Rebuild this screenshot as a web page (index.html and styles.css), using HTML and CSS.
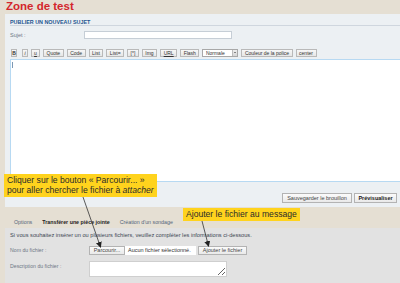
FILE: index.html
```html
<!DOCTYPE html>
<html lang="fr">
<head>
    <meta charset="UTF-8">
    <meta name="viewport" content="width=device-width, initial-scale=1.0">
    <title>Zone de test - Publier un nouveau sujet</title>
    <link rel="stylesheet" href="styles.css">
</head>
<body>
    <div class="page">
        <h1 class="site-title">Zone de test</h1>

        <div class="panel">
            <h2 class="panel-title">Publier un nouveau sujet</h2>
            <div class="field-row">
                <label class="field-label">Sujet :</label>
                <span class="input subject"></span>
            </div>
            <div class="toolbar">
                <span class="tb-btn tb-b">B</span>
                <span class="tb-btn tb-i">i</span>
                <span class="tb-btn tb-u">u</span>
                <span class="tb-btn">Quote</span>
                <span class="tb-btn">Code</span>
                <span class="tb-btn">List</span>
                <span class="tb-btn">List=</span>
                <span class="tb-btn">[*]</span>
                <span class="tb-btn">Img</span>
                <span class="tb-btn tb-url">URL</span>
                <span class="tb-btn">Flash</span>
                <span class="tb-select">Normale<span class="tb-select-arrow"></span></span>
                <span class="tb-btn">Couleur de la police</span>
                <span class="tb-btn">center</span>
            </div>
            <div class="message"><span class="caret"></span></div>
            <div class="submit-row">
                <span class="btn btn-draft">Sauvegarder le brouillon</span>
                <span class="btn btn-preview">Prévisualiser</span>
            </div>
        </div>

        <ul class="tabs">
            <li class="tab">Options</li>
            <li class="tab active">Transférer une pièce jointe</li>
            <li class="tab">Création d'un sondage</li>
        </ul>

        <div class="attach-panel">
            <p class="attach-intro">Si vous souhaitez insérer un ou plusieurs fichiers, veuillez compléter les informations ci-dessous.</p>
            <div class="attach-row">
                <label class="attach-label">Nom du fichier :</label>
                <span class="file-input">
                    <span class="btn btn-browse">Parcourir...</span>
                    <span class="file-name">Aucun fichier sélectionné.</span>
                </span>
                <span class="btn btn-add">Ajouter le fichier</span>
            </div>
            <div class="attach-row attach-row-top">
                <label class="attach-label">Description du fichier :</label>
                <textarea class="file-comment"></textarea>
            </div>
        </div>
    </div>

    <div class="callout callout-browse">Cliquer sur le bouton « Parcourir... »<br>pour aller chercher le fichier à <em>attacher</em></div>
    <div class="callout callout-add">Ajouter le fichier au message</div>

    <svg class="arrows" width="400" height="283" viewBox="0 0 400 283">
        <defs>
            <marker id="head" markerWidth="6" markerHeight="6" refX="5" refY="3" orient="auto" markerUnits="userSpaceOnUse">
                <path d="M0,0 L6,3 L0,6 Z" fill="#222"/>
            </marker>
        </defs>
        <line x1="83" y1="197" x2="100.5" y2="247" stroke="#333" stroke-width="0.8" marker-end="url(#head)"/>
        <line x1="202" y1="221" x2="208.5" y2="246" stroke="#333" stroke-width="0.8" marker-end="url(#head)"/>
    </svg>
</body>
</html>
```

FILE: styles.css
```css
* {
    margin: 0;
    padding: 0;
    box-sizing: border-box;
}

body {
    background: #e5dfd3;
    font-family: 'Liberation Sans', Arial, sans-serif;
    font-size: 5.5px;
    color: #333;
    width: 400px;
    height: 283px;
    overflow: hidden;
    position: relative;
}

.page {
    padding-left: 5px;
}

.site-title {
    font-size: 11.5px;
    line-height: 13.5px;
    color: #d3262c;
    padding-left: 1px;
}

/* posting panel */
.panel {
    background: #ecf0f3;
    padding: 5px 3px 4px 5px;
    overflow: hidden;
}

.panel-title {
    font-size: 5.4px;
    line-height: 6px;
    color: #1d5590;
    text-transform: uppercase;
    border-bottom: 1px solid #cfd6de;
    margin-right: -3px;
}

.field-row {
    display: flex;
    align-items: center;
    margin-top: 5px;
}

.field-label {
    width: 74px;
    color: #6d7785;
}

.input {
    display: block;
    background: #fff;
    border: 1px solid #c6ced6;
}

.subject {
    width: 148px;
    height: 8px;
}

.toolbar {
    display: flex;
    gap: 3px;
    margin-top: 10px;
    padding-left: 1px;
}

.tb-btn, .tb-select {
    height: 8px;
    line-height: 6px;
    font-size: 5px;
    padding: 0 2.5px;
    background: linear-gradient(#f7f7f7, #e6e6e6);
    border: 1px solid #b9b9b9;
    color: #333;
    white-space: nowrap;
}

.tb-b {
    font-weight: bold;
    width: 6px;
    padding: 0;
    text-align: center;
    margin-right: 2px;
}

.tb-i {
    font-style: italic;
    width: 6px;
    padding: 0;
    text-align: center;
}

.tb-u {
    text-decoration: underline;
    width: 9px;
    padding: 0;
    text-align: center;
}

.tb-url {
    text-decoration: underline;
}

.tb-select {
    display: flex;
    justify-content: space-between;
    width: 36px;
    padding-right: 0;
    background: #fff;
    border-color: #a8a8a8;
}

.tb-select-arrow {
    width: 5px;
    height: 6px;
    background: linear-gradient(#eee, #d6d6d6);
    border-left: 1px solid #bbb;
    position: relative;
}

.tb-select-arrow::after {
    content: "";
    position: absolute;
    left: 1px;
    top: 2px;
    border: 1.2px solid transparent;
    border-top: 1.6px solid #222;
}

.message {
    width: 400px;
    height: 123px;
    margin-top: 2px;
    background: #fff;
    border: 1px solid #b7d9f2;
    border-right: none;
    padding: 2px 0 0 1px;
}

.caret {
    display: block;
    width: 1px;
    height: 6px;
    background: #7c98b4;
}

.submit-row {
    display: flex;
    justify-content: flex-end;
    gap: 2px;
    margin-top: 11px;
}

.btn {
    display: inline-block;
    height: 10px;
    line-height: 8px;
    font-size: 5.5px;
    text-align: center;
    background: linear-gradient(#fbfbfb, #e9e9e9);
    border: 1px solid #b3b3b3;
    color: #444;
    white-space: nowrap;
}

.btn-draft {
    width: 70px;
}

.btn-preview {
    width: 43px;
    font-weight: bold;
    color: #222;
}

/* tabs */
.tabs {
    list-style: none;
    display: flex;
    padding-left: 4px;
    margin-top: 10px;
    height: 11px;
}

.tab {
    padding: 0 5px;
    line-height: 11px;
    font-size: 5.3px;
    color: #52657a;
}

.tab.active {
    font-weight: bold;
    color: #222;
}

/* attachment panel */
.attach-panel {
    background: #e2e2e2;
    padding: 4px 0 4px 5px;
    height: 56px;
}

.attach-intro {
    font-size: 5.65px;
    line-height: 7px;
    color: #3d4754;
}

.attach-row {
    display: flex;
    align-items: center;
    margin-top: 7px;
}

.attach-row-top {
    align-items: flex-start;
    margin-top: 6px;
}

.attach-label {
    width: 79px;
    color: #6d7785;
    font-size: 5.2px;
}

.attach-row-top .attach-label {
    padding-top: 2px;
}

.file-input {
    display: flex;
    align-items: center;
    gap: 3px;
    width: 107px;
    background: #fff;
}

.btn-browse {
    width: 36px;
    height: 9px;
    line-height: 7px;
}

.file-name {
    color: #333;
}

.btn-add {
    width: 49px;
    height: 9px;
    line-height: 7px;
    margin-left: 2px;
}

.file-comment {
    display: block;
    width: 138px;
    height: 16px;
    background: #fff;
    border: 1px solid #cfcfcf;
    font-size: 5px;
}

/* annotations */
.callout {
    position: absolute;
    background: #ffd31d;
    color: #2b2b2b;
    font-size: 8.6px;
    line-height: 9.6px;
    white-space: nowrap;
}

.callout-browse {
    left: 4px;
    top: 174px;
    width: 153px;
    height: 23px;
    padding: 2px 0 0 3px;
}

.callout-add {
    left: 183px;
    top: 208px;
    width: 117px;
    height: 13px;
    padding: 1.5px 0 0 3px;
}

.arrows {
    position: absolute;
    left: 0;
    top: 0;
    pointer-events: none;
}
```
